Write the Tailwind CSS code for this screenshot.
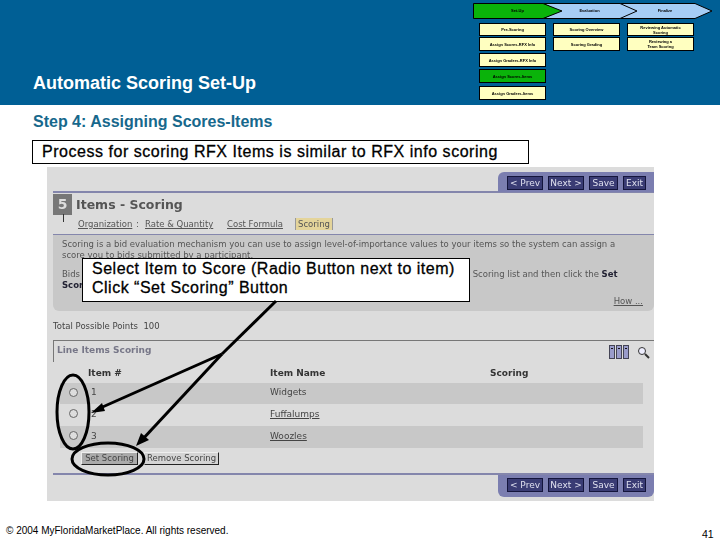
<!DOCTYPE html>
<html>
<head>
<meta charset="utf-8">
<script src="https://cdn.jsdelivr.net/npm/@tailwindcss/browser@4"></script>
</head>
<body class="bg-white">
<div class="relative w-[720px] h-[540px] overflow-hidden font-['Liberation_Sans',Arial,sans-serif] text-black">

  <!-- header band -->
  <div class="relative h-[105px] bg-[#005f95]">
    <h1 class="absolute left-[33px] top-[73px] text-[18px] leading-5 font-bold text-white">Automatic Scoring Set-Up</h1>

    <!-- process map -->
    <div class="absolute left-[473px] top-[3px] w-[243px] h-[95px] blur-[0.4px]">
      <svg class="absolute left-0 top-0" width="243" height="17" viewBox="0 0 243 17">
        <polygon points="142,0.5 222,0.5 239,8 222,15.5 142,15.5 157,8" fill="#a6cdf5" stroke="#000" stroke-width="1"/>
        <polygon points="70,0.5 147,0.5 164,8 147,15.5 70,15.5 86,8" fill="#a6cdf5" stroke="#000" stroke-width="1"/>
        <polygon points="0.5,0.5 70,0.5 89,8 70,15.5 0.5,15.5" fill="#0ab30a" stroke="#000" stroke-width="1"/>
      </svg>
      <div class="absolute left-0 top-0 w-[243px] h-[16px] flex items-center text-[4px] font-bold">
        <span class="w-[76px] text-center pl-[13px]">Set-Up</span>
        <span class="w-[78px] text-center pl-[3px]">Evaluation</span>
        <span class="w-[76px] text-center">Finalize</span>
      </div>
      <div class="absolute left-[6px] top-[20px] flex gap-[7px] text-[4px] leading-[5px] font-bold text-center">
        <div class="w-[67px] flex flex-col gap-[1px]">
          <div class="h-[13px] flex items-center justify-center bg-[#ffffc0] border border-black">Pre-Scoring</div>
          <div class="h-[14px] flex items-center justify-center bg-[#ffffc0] border border-black">Assign Scores-RFX Info</div>
          <div class="h-[14px] mt-[1px] flex items-center justify-center bg-[#ffffc0] border border-black">Assign Graders-RFX Info</div>
          <div class="h-[14px] mt-[1px] flex items-center justify-center bg-[#0ab30a] border border-black">Assign Scores-Items</div>
          <div class="h-[14px] mt-[2px] flex items-center justify-center bg-[#ffffc0] border border-black">Assign Graders-Items</div>
        </div>
        <div class="w-[67px] flex flex-col gap-[1px]">
          <div class="h-[13px] flex items-center justify-center bg-[#ffffc0] border border-black">Scoring Overview</div>
          <div class="h-[14px] flex items-center justify-center bg-[#ffffc0] border border-black">Scoring Grading</div>
        </div>
        <div class="w-[67px] flex flex-col gap-[1px]">
          <div class="h-[13px] flex items-center justify-center bg-[#ffffc0] border border-black">Reviewing Automatic<br>Scoring</div>
          <div class="h-[14px] flex items-center justify-center bg-[#ffffc0] border border-black">Reviewing a<br>Team Scoring</div>
        </div>
      </div>
    </div>
  </div>

  <h2 class="ml-[33px] mt-[8px] text-[16px] leading-[18px] font-bold text-[#17688c]">Step 4: Assigning Scores-Items</h2>

  <div class="ml-[32px] mt-[9px] w-[497px] h-[24px] pl-[9px] border border-black bg-white text-[16px] leading-[22px] tracking-[0.53px] [-webkit-text-stroke:0.3px_#000]">Process for scoring RFX Items is similar to RFX info scoring</div>

  <!-- embedded application screenshot -->
  <div class="ml-[47px] mt-[3px] w-[607px] h-[334px] bg-[#dcdcdc] flex flex-col font-['DejaVu_Sans',sans-serif] text-[#444] blur-[0.4px]">
    <div class="ml-[6px] h-[26px] flex justify-end border-b-2 border-[#8486ac]">
      <div class="w-[156px] mt-[5px] h-[20px] pl-[9px] pt-[4px] flex gap-[5px] bg-[#7b7eb0] rounded-tl-[6px] text-[9px] text-[#dfe0ef]">
        <span class="w-[36px] h-[14px] leading-[13px] text-center bg-[#3a3c74] border border-[#14153c]">&lt; Prev</span>
        <span class="w-[36px] h-[14px] leading-[13px] text-center bg-[#3a3c74] border border-[#14153c]">Next &gt;</span>
        <span class="w-[29px] h-[14px] leading-[13px] text-center bg-[#3a3c74] border border-[#14153c]">Save</span>
        <span class="w-[23px] h-[14px] leading-[13px] text-center bg-[#3a3c74] border border-[#14153c]">Exit</span>
      </div>
    </div>

    <div class="ml-[6px] h-[41px] flex items-start">
      <div class="w-[19px] h-[21px] mt-[1px] bg-[#777] text-[#ddd] text-[14px] leading-[21px] font-bold text-center">5</div>
      <div class="ml-[4px] text-[12.5px] leading-[22px] mt-[1px] font-bold text-[#555]">Items - Scoring</div>
    </div>
    <div class="ml-[16px] -mt-[16px] h-[16px] flex items-start text-[8.5px] leading-[12px] whitespace-nowrap text-[#555]">
      <span class="w-px h-[8px] -mt-[4px] bg-[#333]"></span>
      <span class="ml-[14px] w-[54px] underline">Organization</span>
      <span class="ml-[4px] w-[9px]">:</span>
      <span class="w-[69px] underline">Rate &amp; Quantity</span>
      <span class="ml-[13px] w-[57px] underline">Cost Formula</span>
      <span class="ml-[11px] w-[38px] text-center bg-[#e4d49a] border-x border-[#999]">Scoring</span>
    </div>

    <div class="relative ml-[6px] h-[77px] px-[9px] pt-[4px] bg-[#c8c8c8] border-t border-[#8486ac] rounded-b-[6px] text-[8.5px] leading-[11px] whitespace-nowrap text-[#555]">
      <p>Scoring is a bid evaluation mechanism you can use to assign level-of-importance values to your items so the system can assign a</p>
      <p>score you to bids submitted by a participant.</p>
      <p class="mt-[8px]">Bids <span class="ml-[390px]">Scoring list and then click the <b class="text-[#223]">Set</b></span></p>
      <p class="w-[20px] overflow-hidden font-bold text-[#223]">Scoring</p>
      <span class="absolute right-[11px] bottom-[4px] underline">How ...</span>
    </div>

    <div class="ml-[6px] mt-[9px] h-[13px] text-[8.5px] leading-[13px]">Total Possible Points&nbsp; 100</div>

    <div class="ml-[6px] mt-[7px] h-[22px] pl-[3px] pt-[3px] border-t border-l border-[#777] flex justify-between text-[9px] leading-[12px] font-bold text-[#778]">
      <span>Line Items Scoring</span>
      <div class="flex items-center gap-[8px] pr-[4px] -mt-[2px]">
        <svg width="20" height="14" viewBox="0 0 20 14" stroke="#445">
          <rect x="0.5" y="0.5" width="5" height="13" fill="#9a9ccb"/>
          <rect x="7.5" y="0.5" width="5" height="13" fill="#9a9ccb"/>
          <rect x="14.5" y="0.5" width="5" height="13" fill="#9a9ccb"/>
          <path d="M2 3l1 1 1-1M9 4l1-1 1 1M16 3l1 1 1-1" fill="none" stroke="#111"/>
        </svg>
        <svg width="13" height="13" viewBox="0 0 13 13" fill="none" stroke="#333"><circle cx="5" cy="5" r="3.5" fill="#eef"/><path d="M8 8l4 4" stroke-width="2"/></svg>
      </div>
    </div>

    <div class="ml-[13px] w-[583px] text-[9px] leading-[12px]">
      <div class="h-[21px] grid grid-cols-[210px_220px_1fr] pt-[5px] font-bold text-[#333]">
        <span class="pl-[28px]">Item #</span><span>Item Name</span><span>Scoring</span>
      </div>
      <div class="h-[21px] pb-[3px] grid grid-cols-[210px_220px_1fr] items-center bg-[#c8c8c8]">
        <div class="flex items-center"><span class="w-[9px] h-[9px] ml-[9px] rounded-full border border-[#666] bg-[#ddd]"></span><span class="ml-[13px]">1</span></div>
        <span>Widgets</span><span></span>
      </div>
      <div class="h-[22px] pb-[3px] grid grid-cols-[210px_220px_1fr] items-center">
        <div class="flex items-center"><span class="w-[9px] h-[9px] ml-[9px] rounded-full border border-[#666] bg-[#ddd]"></span><span class="ml-[13px]">2</span></div>
        <span class="underline">Fuffalumps</span><span></span>
      </div>
      <div class="h-[22px] pb-[3px] grid grid-cols-[210px_220px_1fr] items-center bg-[#c8c8c8]">
        <div class="flex items-center"><span class="w-[9px] h-[9px] ml-[9px] rounded-full border border-[#666] bg-[#ddd]"></span><span class="ml-[13px]">3</span></div>
        <span class="underline">Woozles</span><span></span>
      </div>
    </div>

    <div class="ml-[34px] mt-[4px] h-[13px] flex gap-[6px] text-[8.5px] leading-[11px] whitespace-nowrap">
      <span class="w-[57px] text-center bg-[#aaa] border border-r-[#222] border-b-[#222] border-l-[#eee] border-t-[#eee]">Set Scoring</span>
      <span class="w-[75px] text-center bg-[#d4d4d4] border border-r-[#222] border-b-[#222] border-l-[#eee] border-t-[#eee]">Remove Scoring</span>
    </div>

    <div class="ml-[6px] mt-[8px] h-[22px] flex justify-end border-t-2 border-[#8486ac]">
      <div class="w-[156px] h-[22px] pl-[9px] pt-[3px] flex gap-[5px] bg-[#7b7eb0] rounded-b-[6px] text-[9px] text-[#dfe0ef]">
        <span class="w-[36px] h-[14px] leading-[13px] text-center bg-[#3a3c74] border border-[#14153c]">&lt; Prev</span>
        <span class="w-[36px] h-[14px] leading-[13px] text-center bg-[#3a3c74] border border-[#14153c]">Next &gt;</span>
        <span class="w-[29px] h-[14px] leading-[13px] text-center bg-[#3a3c74] border border-[#14153c]">Save</span>
        <span class="w-[23px] h-[14px] leading-[13px] text-center bg-[#3a3c74] border border-[#14153c]">Exit</span>
      </div>
    </div>
  </div>

  <!-- callout -->
  <div class="absolute left-[82px] top-[258px] w-[388px] h-[44px] pl-[9px] bg-white border border-black text-[16px] leading-[19px] tracking-[0.5px] whitespace-nowrap [-webkit-text-stroke:0.3px_#000]">
    Select Item to Score (Radio Button next to item)<br>Click “Set Scoring” Button
  </div>

  <!-- annotation arrows and ellipses -->
  <svg class="absolute left-0 top-0 pointer-events-none" width="720" height="540" viewBox="0 0 720 540" fill="none" stroke="#000">
    <path d="M276 301L222 354" stroke-width="3"/>
    <path d="M222 354L98 409" stroke-width="3"/>
    <path d="M222 354L141 441" stroke-width="3"/>
    <polygon points="91,413 102,403 105,411" fill="#000" stroke="none"/>
    <polygon points="136,446 141,433 149,440" fill="#000" stroke="none"/>
    <ellipse cx="73" cy="412" rx="16" ry="37" stroke-width="3"/>
    <ellipse cx="108" cy="459" rx="36" ry="16" stroke-width="3"/>
  </svg>

  <p class="absolute left-[6px] top-[524px] text-[10px] leading-[13px]">© 2004 MyFloridaMarketPlace. All rights reserved.</p>
  <p class="absolute left-[702px] top-[528px] text-[10.5px] leading-[13px]">41</p>
</div>
</body>
</html>
